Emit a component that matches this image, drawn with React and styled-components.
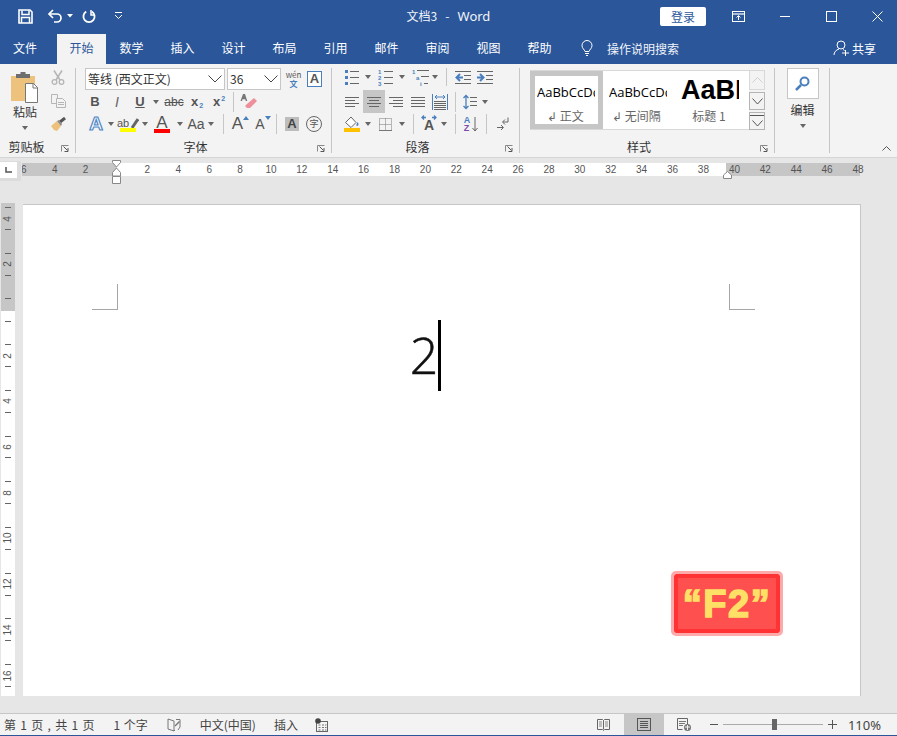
import React from 'react';
import styled, { createGlobalStyle } from 'styled-components';

const UI = `"Noto Sans CJK SC", "Noto Sans", sans-serif`;
const LATIN = `"Liberation Sans", "Noto Sans CJK SC", sans-serif`;
const BLUE = '#2b579a';
const INK = '#555';
const ICON_BLUE = '#4a7fbd';

const Global = createGlobalStyle`
  html, body { margin: 0; padding: 0; background: #e6e6e6; }
  * { box-sizing: border-box; }
`;

const App_ = styled.div`
  width: 897px; height: 736px; overflow: hidden; display: flex; flex-direction: column;
  font-family: ${UI}; font-size: 12px; color: #444; background: #e6e6e6;
`;

/* ---------- title + tabs ---------- */
const TitleBar = styled.header`
  height: 34px; flex: none; background: ${BLUE}; display: grid; grid-template-columns: 1fr auto 1fr; align-items: center; color: #fff; padding-bottom: 2px;
`;
const Quick = styled.div`display: flex; align-items: center; padding-left: 18px; height: 100%;`;
const QuickCell = styled.span`
  display: flex; align-items: center; justify-content: center; flex: none; width: ${p => p.$w}px; margin-left: ${p => p.$l || 0}px; height: 18px;
`;
const DocTitle = styled.div`font: 12px/16px "Noto Sans CJK SC", sans-serif; color: #f1f4f9; white-space: pre; display: flex; align-items: baseline;`;
const DocWord = styled.span`font: 13px/16px "Noto Sans", sans-serif;`;
const WinControls = styled.div`display: flex; align-items: center; justify-content: flex-end; height: 100%;`;
const Login = styled.button`
  width: 46px; height: 19px; padding: 0; border: 0; border-radius: 2px; background: #fff; color: ${BLUE}; font: 12px/19px ${UI}; margin-right: 26px;
`;
const WinBtn = styled.span`display: flex; align-items: center; justify-content: center; width: ${p => p.$w}px; margin-left: ${p => p.$l || 0}px; height: 100%; flex: none;`;

const TabBar = styled.nav`height: 30px; flex: none; background: ${BLUE}; display: flex; align-items: stretch; color: #fff;`;
const Tab = styled.div`
  flex: none; width: ${p => p.$w || 51}px; margin-right: ${p => p.$mr || 0}px; display: flex; align-items: center; justify-content: center;
  font-size: 12px; line-height: 16px; padding-bottom: 2px;
  background: ${p => (p.$active ? '#f3f3f3' : 'transparent')}; color: ${p => (p.$active ? BLUE : '#fff')};
`;
const Tell = styled.div`display: flex; align-items: center; margin-left: 16px; padding-bottom: 2px; gap: 14px; color: #f1f4f9;`;
const Share = styled.div`display: flex; align-items: center; margin-left: auto; padding: 0 21px 2px 0; gap: 3px;`;

/* ---------- ribbon ---------- */
const Ribbon = styled.section`
  height: 94px; flex: none; background: #f3f3f3; border-bottom: 1px solid #d4d4d4; padding-top: 4px; display: flex; align-items: flex-start;
`;
const Group = styled.div`
  flex: none; width: ${p => p.$w}px; height: 85px; display: flex; flex-direction: column; justify-content: space-between;
  border-right: 1px solid #c6c6c6; margin-right: ${p => p.$mr ?? 1}px;
`;
const GroupBody = styled.div`display: flex; flex-direction: column; padding-left: ${p => p.$pl || 0}px;`;
const LabelRow = styled.div`display: flex; align-items: center; height: 14px; padding-right: 2px; margin-bottom: -1px;`;
const GroupLabel = styled.span`flex: 1; text-align: center; font-size: 12px; line-height: 14px; color: #333; padding-right: ${p => p.$nudge || 0}px;`;
const Launcher = styled.span`width: 14px; display: flex; justify-content: center; flex: none; margin-top: 3px; margin-right: 1px;`;

const Row = styled.div`display: flex; height: ${p => p.$h}px; margin-top: ${p => p.$t || 0}px; align-items: stretch;`;
const Cell = styled.span`
  flex: none; width: ${p => p.$w}px; margin-left: ${p => p.$l || 0}px; display: flex; flex-direction: column; align-items: center; justify-content: center;
  background: ${p => (p.$active ? '#c6c6c6' : 'transparent')};
`;
const Caret = styled.i`
  display: block; width: 0; height: 0; border-left: 3.5px solid transparent; border-right: 3.5px solid transparent; border-top: 4px solid #666;
`;
const Rule = styled.i`display: block; width: 1px; height: 20px; background: #c6c6c6;`;
const Letter = styled.span`
  font-family: ${LATIN}; font-size: ${p => p.$s || 13}px; line-height: ${p => p.$lh || 14}px; font-weight: ${p => (p.$b ? 700 : 400)};
  font-style: ${p => (p.$i ? 'italic' : 'normal')}; color: ${p => p.$c || INK};
  text-decoration: ${p => p.$d || 'none'}; white-space: nowrap; display: inline-flex;
`;
const Script = styled.span`
  font-size: 7px; line-height: 7px; color: ${ICON_BLUE}; font-weight: 700; margin-left: 1px; align-self: ${p => (p.$up ? 'flex-start' : 'flex-end')};
`;
const OutlinedA = styled.span`
  font: 700 19px/18px ${LATIN}; color: #fff; -webkit-text-stroke: 1.2px #4f86c6;
`;
const Swatch = styled.i`display: block; width: 16px; height: 4px; background: ${p => p.$c}; margin-top: -1px;`;
const GrayA = styled.span`
  width: 14px; height: 14px; background: #bdbdbd; color: #444; display: flex; align-items: center; justify-content: center; font: 700 13px/14px ${LATIN};
`;
const CircleChar = styled.span`
  width: 16px; height: 16px; border: 1px solid #666; border-radius: 50%; display: flex; align-items: center; justify-content: center; font-size: 9px; line-height: 14px; color: #555;
`;
const BoxA = styled.span`
  width: 15px; height: 16px; border: 1px solid ${ICON_BLUE}; background: #fff; display: flex; align-items: center; justify-content: center; font: 700 13px/14px ${LATIN}; color: #555;
`;
const Wen = styled.span`display: flex; flex-direction: column; align-items: center; font-size: 8px; line-height: 8px; color: #555; gap: 1px;`;
const WenHan = styled.span`color: ${ICON_BLUE}; font-size: 8px; line-height: 8px; font-weight: 700;`;
const Combo = styled.div`
  flex: none; width: ${p => p.$w}px; margin-right: ${p => p.$mr || 0}px; height: 22px; background: #fff; border: 1px solid #c6c6c6; display: flex; align-items: center; justify-content: space-between;
  padding: 0 2px; font-size: 12px; color: #333; line-height: 20px;
`;
const Clip = styled.div`display: flex;`;
const PasteCol = styled.div`width: 50px; flex: none; display: flex; flex-direction: column; align-items: center; padding-top: 4px;`;
const PasteText = styled.span`font-size: 12px; line-height: 16px; margin-top: 1px; margin-bottom: 6px; color: #333;`;
const SmallCol = styled.div`width: 16px; flex: none; display: flex; flex-direction: column; align-items: center; gap: 9px; padding-top: 2px;`;

const Gallery = styled.div`display: flex; margin: 2px 0 0 9px; height: 60px;`;
const GalleryItems = styled.div`display: flex; width: 219px; background: #fff; border: solid #d8d8d8; border-width: 1px 0 1px 0;`;
const StyleItem = styled.div`
  flex: none; width: 73px; display: flex; flex-direction: column; align-items: flex-start; padding: ${p => (p.$sel ? '0 0 0 2px' : '0 0 0 6px')};
  border: ${p => (p.$sel ? '5px solid #c6c6c6' : '0')};
`;
const Sample = styled.div`
  width: 58px; overflow: hidden; white-space: nowrap; font-family: ${p => (p.$big ? LATIN : '"Open Sans", sans-serif')}; color: #000;
  margin-top: ${p => (p.$big ? 9 : p.$sel ? 6 : 11)}px; margin-left: ${p => (p.$big ? -1 : 0)}px; margin-bottom: ${p => (p.$big ? 2 : 0)}px;
  font-size: ${p => (p.$big ? 27 : 13)}px; font-weight: ${p => (p.$big ? 700 : 400)}; line-height: 20px; height: 20px;
`;
const Caption = styled.div`
  width: 100%; text-align: center; font-size: 12px; line-height: 16px; color: #666; white-space: pre; margin-top: 6px; padding-right: ${p => p.$pr || 0}px;
`;
const ScrollCol = styled.div`display: flex; flex-direction: column; width: 16px; gap: 2px; flex: none;`;
const ScrollBtn = styled.div`
  height: ${p => p.$h}px; display: flex; flex-direction: column; gap: 4px; align-items: center; justify-content: center; border: 1px solid ${p => (p.$off ? '#d8d8d8' : '#b4b4b4')};
`;
const MoreLine = styled.i`display: block; width: 14px; height: 1px; background: #555;`;
const EditBody = styled.div`display: flex; flex-direction: column; align-items: center;`;
const EditBtn = styled.div`
  width: 32px; height: 31px; background: #fff; border: 1px solid #c6c6c6; display: flex; align-items: center; justify-content: center;
`;
const EditText = styled.span`font-size: 12px; line-height: 16px; margin: 3px 0 6px; color: #333;`;
const Collapse = styled.div`flex: 1; height: 85px; display: flex; align-items: flex-end; justify-content: flex-end; padding: 0 6px 2px 0;`;

/* ---------- rulers + page ---------- */
const Work = styled.main`flex: 1; min-height: 0; display: flex; flex-direction: column; background: #e6e6e6;`;
const RulerRow = styled.div`display: flex; height: 24px; flex: none; padding-top: 3px;`;
const Corner = styled.div`width: 21px; height: 20px; flex: none; background: #dcdcdc; padding: 1px 4px 3px 0;`;
const CornerBox = styled.div`width: 17px; height: 16px; background: #fff; display: flex; align-items: center; justify-content: center;`;
const HRuler = styled.div`display: flex; height: 13px; margin: 2px 0 0 1px; position: relative; font: 10px/13px ${LATIN}; color: #555;`;
const LeftSeg = styled.div`width: 94.5px; background: #c6c6c6; overflow: hidden; display: flex; flex-direction: row-reverse; padding-right: 15.45px; flex: none;`;
const MidSeg = styled.div`width: 609.5px; background: #fff; display: flex; padding-left: 15.45px; flex: none;`;
const RightSeg = styled.div`width: 134px; background: #c6c6c6; display: flex; flex: none;`;
const RightInner = styled.div`display: flex; margin-left: -7px;`;
const Num = styled.span`flex: none; width: 30.9px; text-align: center;`;
const Marker = styled.span`position: absolute; left: ${p => p.$x}px; top: ${p => p.$y}px; display: block; line-height: 0;`;

const Body = styled.div`flex: 1; min-height: 0; display: flex; padding: 21px 0 17px 0;`;
const VRuler = styled.div`
  width: 14px; margin: 0 8px 0 1px; flex: none; display: flex; flex-direction: column; font: 10px/10px ${LATIN}; color: #555; overflow: hidden;
`;
const VGray = styled.div`height: 108px; flex: none; background: #c6c6c6; display: flex; flex-direction: column; justify-content: flex-end; padding-bottom: 1px; overflow: hidden;`;
const VWhite = styled.div`flex: 1; background: #fff; display: flex; flex-direction: column; overflow: hidden;`;
const VCell = styled.div`flex: none; height: 45.7px; display: flex; flex-direction: column; align-items: center; justify-content: center; gap: 5.4px;`;
const VHalf = styled.div`flex: none; height: ${p => p.$h || 22.85}px; display: flex; align-items: center; justify-content: center;`;
const Tick = styled.i`display: block; width: 6px; height: 1px; background: #666; flex: none;`;
const VNum = styled.span`display: block; height: 10px; transform: rotate(-90deg);`;
const Page = styled.div`
  width: 838px; margin-top: 1px; background: #fff; border-top: 1px solid #c6c6c6; border-right: 1px solid #c6c6c6; position: relative; flex: none; padding: 79px 105px 0 69px;
`;
const Marks = styled.div`display: flex; justify-content: space-between;`;
const Mark = styled.i`
  display: block; width: 26px; height: 26px; border-bottom: 1px solid #a6a6a6;
  ${p => (p.$right ? 'border-left: 1px solid #a6a6a6;' : 'border-right: 1px solid #a6a6a6;')}
`;
const Para = styled.div`display: flex; justify-content: center; align-items: center; height: 71px; margin-top: 10px; padding-left: 4px;`;
const Digit = styled.span`font: 300 50px/71px "Open Sans", "Noto Sans", sans-serif; color: #111; -webkit-text-stroke: 0.5px #111;`;
const Caretline = styled.i`display: block; width: 3px; height: 71px; background: #000;`;
const Badge = styled.div`
  position: absolute; left: 651px; top: 369px; width: 106px; height: 59px; background: #ff5050; border: 4px solid #ff3333; outline: 3px solid #ffaaaa;
  border-radius: 2px; display: flex; align-items: center; justify-content: center; color: #ffe066; white-space: nowrap;
  font: 700 38px/40px ${LATIN}; -webkit-text-stroke: 1.5px #ffe066; letter-spacing: 1.5px;
`;

/* ---------- status ---------- */
const Status = styled.footer`
  height: 23px; flex: none; background: #f3f3f3; border-top: 1px solid #c6c6c6; border-bottom: 1px solid ${BLUE}; display: flex; align-items: stretch; color: #444; font-size: 12px; line-height: 16px; padding-left: 4px;
`;
const StatusText = styled.span`display: flex; align-items: center; white-space: pre; margin-left: ${p => p.$l || 0}px; word-spacing: ${p => p.$ws || 0}px;`;
const StatusIcon = styled.span`display: flex; align-items: center; justify-content: center; flex: none; width: ${p => p.$w}px; margin-left: ${p => p.$l || 0}px; background: ${p => (p.$on ? '#c6c6c6' : 'transparent')};`;
const StatusRight = styled.div`margin-left: auto; display: flex; align-items: stretch; padding-right: 16px;`;
const Track = styled.span`
  width: 100px; margin-left: 5px; display: flex; align-items: center; justify-content: center; background: linear-gradient(#aaa, #aaa) center / 100% 1px no-repeat;
`;
const Thumb = styled.i`display: block; width: 5px; height: 11px; background: #666; margin-left: 3px;`;
const Zoom = styled.span`display: flex; align-items: center; margin-left: 11px; font: 13px/16px "Noto Sans", sans-serif; color: #444;`;

/* ---------- icons ---------- */
const Svg = ({ w, h, children, ...r }) => (
  <svg width={w} height={h} viewBox={`0 0 ${w} ${h}`} fill="none" style={{ display: 'block', flex: 'none' }} {...r}>{children}</svg>
);
const Lines = ({ rows, c = '#666' }) => rows.map(([a, b, y], i) => <path key={i} d={`M${a} ${y + 0.5}H${b}`} stroke={c} />);

const SaveIco = () => (
  <Svg w={15} h={15}><path d="M1 1h11l2 2v11H1z" stroke="#fff" strokeWidth="1.6" /><path d="M4 1.5v4h7v-4M3.5 14V8.5h8V14" stroke="#fff" strokeWidth="1.5" /></Svg>
);
const UndoIco = () => (
  <Svg w={16} h={14}><path d="M2 5h8a4 4 0 0 1 0 8H7" stroke="#fff" strokeWidth="1.7" /><path d="M6 1 2 5l4 4" stroke="#fff" strokeWidth="1.7" /></Svg>
);
const RedoIco = () => (
  <Svg w={14} h={14}><path d="M4.2 2.6a5.6 5.6 0 1 0 5.6 0" stroke="#fff" strokeWidth="1.8" /><path d="M9 1v5h4" stroke="#fff" strokeWidth="1.5" /></Svg>
);
const CustomizeIco = () => (
  <Svg w={9} h={8}><path d="M1 .5h7" stroke="#fff" /><path d="M1 3l3.5 3.5L8 3" stroke="#fff" /></Svg>
);
const WhiteCaret = () => <Svg w={6} h={4}><path d="M0 0h6L3 3.5z" fill="#fff" /></Svg>;
const DisplayIco = () => (
  <Svg w={13} h={11}><rect x=".5" y=".5" width="12" height="10" stroke="#fff" /><path d="M0 3h13" stroke="#fff" strokeWidth="1.2" /><path d="M6.5 9V5M4.5 6.5l2-2 2 2" stroke="#fff" /></Svg>
);
const MinIco = () => <Svg w={10} h={1}><path d="M0 .5h10" stroke="#fff" /></Svg>;
const MaxIco = () => <Svg w={11} h={11}><rect x=".5" y=".5" width="10" height="10" stroke="#fff" /></Svg>;
const CloseIco = () => <Svg w={11} h={11}><path d="M.5.5l10 10M10.5.5l-10 10" stroke="#fff" /></Svg>;
const BulbIco = () => (
  <Svg w={12} h={16}><path d="M4 11.5C3.5 9.5 1 8.5 1 5.5a5 5 0 0 1 10 0c0 3-2.5 4-3 6z" stroke="#fff" /><path d="M4 13.5h4M5 15.5h2" stroke="#fff" /></Svg>
);
const PersonIco = () => (
  <Svg w={16} h={16}><circle cx="8" cy="5" r="4" stroke="#fff" /><path d="M1 15c0-3 2-5 5-6M10 9.5c.6.2 1.2.6 1.6 1M9 13h7M12.5 10v6" stroke="#fff" /></Svg>
);
const PasteIco = () => (
  <Svg w={29} h={31}>
    <path d="M0 4h24v25H0z" fill="#ecc27c" />
    <path d="M5 4V2h4.5V0h5v2H19v4H5z" fill="#6e6e6e" />
    <path d="M14.5 11.5h8l4 4v15h-12z" fill="#fff" stroke="#777" />
    <path d="M22 11.5v4.5h4.5" stroke="#777" />
  </Svg>
);
const ScissorsIco = () => (
  <Svg w={14} h={15}><path d="M3 .5 9 10M11 .5 5 10" stroke="#b5b5b5" strokeWidth="1.5" /><circle cx="3.5" cy="12" r="2.3" stroke="#b5b5b5" strokeWidth="1.3" /><circle cx="10.5" cy="12" r="2.3" stroke="#b5b5b5" strokeWidth="1.3" /></Svg>
);
const CopyIco = () => (
  <Svg w={15} h={14}><path d="M.5.5h6v9h-6z" stroke="#b5b5b5" fill="#f3f3f3" /><path d="M5.5 4.5h6l3 3v6h-9z" stroke="#b5b5b5" fill="#f3f3f3" /><path d="M7 8.5h6M7 10.5h6" stroke="#b5b5b5" /></Svg>
);
const BrushIco = () => (
  <Svg w={16} h={15}><path d="M10 5 15 1" stroke="#555" strokeWidth="3" /><path d="M1 9l6-5 4 5-4 5-3-1z" fill="#edc07c" /><path d="M7 4l2-1 3 4-1 2z" fill="#8a8a8a" /></Svg>
);
const Launch = () => (
  <Svg w={8} h={7}><path d="M.5 6.5V.5h7" stroke="#888" /><path d="M2.5 1.5l4 4M7 3v3.5H3.5" stroke="#555" /></Svg>
);
const Chevron = ({ c = '#444', w = 14, h = 8 }) => (
  <Svg w={w} h={h}><path d={`M.5 .5 ${w / 2} ${h - 1} ${w - 0.5} .5`} stroke={c} /></Svg>
);
const ChevronUp = ({ c, w = 10, h = 6 }) => (
  <Svg w={w} h={h}><path d={`M.5 ${h - 0.5} ${w / 2} .5 ${w - 0.5} ${h - 0.5}`} stroke={c} /></Svg>
);
const EraserIco = () => (
  <Svg w={18} h={17}><path d="M3 0 .5 7h1.5l.6-1.8h2.6L5.8 7h1.5L5 0z" fill="#777" /><path d="M7 10l7-6 3 3-7 7H7l-2-2z" fill="#ee8f9c" /></Svg>
);
const HighlightIco = () => (
  <Svg w={8} h={12}><path d="M1 11 7 2" stroke="#666" strokeWidth="3" /></Svg>
);
const TriUp = () => <Svg w={6} h={4}><path d="M3 0l3 4H0z" fill={ICON_BLUE} /></Svg>;
const TriDown = () => <Svg w={6} h={4}><path d="M0 0h6L3 4z" fill={ICON_BLUE} /></Svg>;
const Dots = ({ ys, x = 1.5 }) => ys.map(y => <rect key={y} x={x} y={y} width="3" height="3" fill={ICON_BLUE} />);
const BulletsIco = () => (
  <Svg w={14} h={17}><Dots x={0} ys={[1, 7, 13]} /><Lines rows={[[5, 14, 2], [5, 14, 8], [5, 14, 14]]} /></Svg>
);
const Small = styled.text`font: 700 6px ${LATIN}; fill: ${ICON_BLUE};`;
const NumbersIco = () => (
  <Svg w={16} h={18}>
    <Small x="0" y="6">1</Small><Small x="0" y="12">2</Small><Small x="0" y="18">3</Small>
    <Lines rows={[[6, 15, 3], [6, 15, 9], [6, 15, 15]]} />
  </Svg>
);
const MultiIco = () => (
  <Svg w={17} h={18}>
    <Small x="0" y="6">1</Small><Small x="4" y="12">a</Small><Small x="8" y="18">i</Small>
    <Lines rows={[[5, 17, 2], [9, 17, 8], [12, 16, 15]]} />
  </Svg>
);
const OutdentIco = () => (
  <Svg w={16} h={13}>
    <path d="M8 6.5H2M5 3 1.5 6.5 5 10" stroke={ICON_BLUE} strokeWidth="2" />
    <Lines rows={[[0, 16, 0], [9, 16, 4], [9, 16, 8], [0, 16, 12]]} />
  </Svg>
);
const IndentIco = () => (
  <Svg w={16} h={13}>
    <path d="M0 6.5h6M3 3l3.5 3.5L3 10" stroke={ICON_BLUE} strokeWidth="2" />
    <Lines rows={[[0, 16, 0], [9, 16, 4], [9, 16, 8], [0, 16, 12]]} />
  </Svg>
);
const AlignIco = ({ rows }) => <Svg w={14} h={11}><Lines rows={rows} /></Svg>;
const DistIco = () => (
  <Svg w={16} h={16}>
    <path d="M.5 0v16M15.5 0v16" stroke={ICON_BLUE} />
    <path d="M3 3h10M5 1 3 3l2 2M11 1l2 2-2 2" stroke={ICON_BLUE} />
    <Lines rows={[[2, 14, 7], [2, 14, 9], [2, 14, 11], [2, 14, 13], [2, 14, 15]]} />
  </Svg>
);
const SpacingIco = () => (
  <Svg w={14} h={16}>
    <path d="M3 2v12M.5 4 3 1.5 5.5 4M.5 12 3 14.5 5.5 12" stroke={ICON_BLUE} strokeWidth="1.3" />
    <Lines rows={[[7, 14, 3], [7, 14, 7], [7, 14, 11]]} />
  </Svg>
);
const FillIco = () => (
  <Svg w={16} h={16}>
    <path d="M7 1 1.5 6.5 7 11.5l5-5z" fill="#fff" stroke="#666" />
    <path d="M13.5 6c1 1.5 1.5 2.5.5 3.5s-2 0-1.5-1z" fill={ICON_BLUE} />
    <rect y="12" width="16" height="4" fill="#ffc000" />
  </Svg>
);
const BordersIco = () => (
  <Svg w={13} h={13}>
    <path d="M.5 .5h12v12H.5zM.5 6.5h12M6.5 .5v12" stroke="#777" strokeDasharray="1 1" />
    <path d="M0 12.5h13" stroke="#777" />
  </Svg>
);
const ArrowsTop = () => (
  <Svg w={16} h={5}><path d="M1 2.5h4M3 .5l-2 2 2 2M11 2.5h4M13 .5l2 2-2 2" stroke={ICON_BLUE} strokeWidth="1.3" /></Svg>
);
const SortStack = styled.span`display: flex; align-items: center; gap: 2px;`;
const TopAligned = styled.span`display: flex; align-items: flex-start; gap: 0;`;
const SortLetters = styled.span`display: flex; flex-direction: column; font: 700 9px/8px ${LATIN};`;
const ChArrows = styled.span`display: flex; flex-direction: column; align-items: center; margin-top: -2px;`;
const DownArrow = () => <Svg w={6} h={15}><path d="M3 0v14M.5 11 3 14l2.5-3" stroke="#666" /></Svg>;
const PilcrowIco = () => (
  <Svg w={12} h={14}>
    <path d="M11 .5V5H6M8 2.5 5.5 5 8 7.5" stroke="#666" />
    <path d="M0 10.5h6M4 8l2.5 2.5L4 13" stroke="#666" />
  </Svg>
);
const SearchIco = () => (
  <Svg w={15} h={15}><circle cx="9.5" cy="5.5" r="4" stroke={ICON_BLUE} strokeWidth="2" /><path d="M6 9l-5 5" stroke={ICON_BLUE} strokeWidth="2.5" /></Svg>
);
const TabStopIco = () => <Svg w={7} h={6}><path d="M1 0v5h6" stroke="#555" strokeWidth="1.5" /></Svg>;
const HourglassIco = () => (
  <Svg w={9} h={25}>
    <path d="M.5 .5h8v2L4.5 7 .5 2.5z" fill="#fff" stroke="#888" />
    <path d="M4.5 8 .5 12.5V16h8v-3.5z" fill="#fff" stroke="#888" />
    <path d="M.5 16.5h8v7h-8z" fill="#fff" stroke="#888" />
  </Svg>
);
const RightIndentIco = () => <Svg w={9} h={8}><path d="M4.5 .5 8.5 4v3.5h-8V4z" fill="#fff" stroke="#888" /></Svg>;
const ReadIco = () => (
  <Svg w={13} h={13}><path d="M.5 1.5h5l1 1 1-1h5v10h-5l-1 1-1-1h-5zM6.5 2.5v9" stroke="#666" /><path d="M2 4h3M2 6h3M2 8h3M8 4h3M8 6h3M8 8h3" stroke="#888" /></Svg>
);
const PrintIco = () => (
  <Svg w={14} h={13}><rect x=".5" y=".5" width="13" height="12" stroke="#555" /><path d="M3 3.5h8M3 5.5h8M3 7.5h8M3 9.5h8" stroke="#555" /></Svg>
);
const WebIco = () => (
  <Svg w={14} h={13}><path d="M.5 .5h10v9" stroke="#666" /><path d="M.5 .5v11h5" stroke="#666" /><path d="M2 3.5h7M2 5.5h6M2 7.5h4" stroke="#777" /><circle cx="10.5" cy="9.5" r="3.5" fill="#777" /><path d="M8 9h5M10.5 7v5" stroke="#f3f3f3" /></Svg>
);
const BookIco = () => (
  <Svg w={14} h={14}><path d="M7 3 1 1v10l6 2 1-1" stroke="#777" /><path d="M7 3v10" stroke="#777" /><path d="M9 1.5h4V9l-2 3" stroke="#777" /><path d="M8 8 12.5 3.5" stroke="#777" strokeWidth="1.5" /></Svg>
);
const MacroIco = () => (
  <Svg w={13} h={14}>
    <rect x="1.5" y="3.5" width="11" height="10" stroke="#666" fill="#f3f3f3" />
    <path d="M3.5 7h2M7 7h2M10 7h1.500M3.500 9.500h2M7 9.500h2M10 9.500h1.500M3.500 12h2M7 12h2M10 12h1.500" stroke="#777" />
    <circle cx="3" cy="3" r="2.8" fill="#444" />
  </Svg>
);

const hLeft = [6, 4, 2];
const hMid = Array.from({ length: 19 }, (_, i) => (i + 1) * 2);
const hRight = [40, 42, 44, 46, 48];
const vDown = [2, 4, 6, 8, 10, 12, 14, 16];

export default function App() {
  return (
    <App_>
      <Global />
      <TitleBar>
        <Quick>
          <QuickCell $w={15}><SaveIco /></QuickCell>
          <QuickCell $w={16} $l={14}><UndoIco /></QuickCell>
          <QuickCell $w={6} $l={4}><WhiteCaret /></QuickCell>
          <QuickCell $w={14} $l={9}><RedoIco /></QuickCell>
          <QuickCell $w={9} $l={18}><CustomizeIco /></QuickCell>
        </Quick>
        <DocTitle>文档3   -   <DocWord>Word</DocWord></DocTitle>
        <WinControls>
          <Login>登录</Login>
          <WinBtn $w={13}><DisplayIco /></WinBtn>
          <WinBtn $w={46} $l={17}><MinIco /></WinBtn>
          <WinBtn $w={46}><MaxIco /></WinBtn>
          <WinBtn $w={40} $l={3}><CloseIco /></WinBtn>
        </WinControls>
      </TitleBar>
      <TabBar>
        <Tab $w={50} $mr={7}>文件</Tab>
        <Tab $w={49} $active>开始</Tab>
        {['数学', '插入', '设计', '布局', '引用', '邮件', '审阅', '视图', '帮助'].map(t => <Tab key={t}>{t}</Tab>)}
        <Tell><BulbIco /><span>操作说明搜索</span></Tell>
        <Share><PersonIco /><span>共享</span></Share>
      </TabBar>

      <Ribbon>
        <Group $w={76}>
          <Clip>
            <PasteCol>
              <PasteIco />
              <PasteText>粘贴</PasteText>
              <Caret />
            </PasteCol>
            <SmallCol>
              <ScissorsIco />
              <CopyIco />
              <BrushIco />
            </SmallCol>
          </Clip>
          <LabelRow><GroupLabel $nudge={5}>剪贴板</GroupLabel><Launcher><Launch /></Launcher></LabelRow>
        </Group>

        <Group $w={255}>
          <GroupBody $pl={8}>
            <Row $h={22}>
              <Combo $w={140} $mr={2}><span>等线 (西文正文)</span><Chevron /></Combo>
              <Combo $w={54}><span>36</span><Chevron /></Combo>
              <Cell $w={21} $l={2}><Wen><span>wén</span><WenHan>文</WenHan></Wen></Cell>
              <Cell $w={15} $l={3}><BoxA>A</BoxA></Cell>
            </Row>
            <Row $h={22} $t={1}>
              <Cell $w={20}><Letter $b>B</Letter></Cell>
              <Cell $w={24}><Letter $i $s={14} $c="#666">I</Letter></Cell>
              <Cell $w={22}><Letter $b $d="underline" $c="#555">U</Letter></Cell>
              <Cell $w={10}><Caret /></Cell>
              <Cell $w={26}><Letter $s={12} $d="line-through">abc</Letter></Cell>
              <Cell $w={20}><Letter $b $s={13}>x<Script>2</Script></Letter></Cell>
              <Cell $w={24}><Letter $b $s={13}>x<Script $up>2</Script></Letter></Cell>
              <Cell $w={4}><Rule /></Cell>
              <Cell $w={28}><EraserIco /></Cell>
            </Row>
            <Row $h={22}>
              <Cell $w={22}><OutlinedA>A</OutlinedA></Cell>
              <Cell $w={7}><Caret /></Cell>
              <Cell $w={28}>
                <SortStack><Letter $s={11} $lh={12}>ab</Letter><HighlightIco /></SortStack>
                <Swatch $c="#ffff00" />
              </Cell>
              <Cell $w={6}><Caret /></Cell>
              <Cell $w={28}><Letter $s={17} $lh={15}>A</Letter><Swatch $c="#ff0000" /></Cell>
              <Cell $w={8}><Caret /></Cell>
              <Cell $w={24}><Letter $s={14}>Aa</Letter></Cell>
              <Cell $w={6}><Caret /></Cell>
              <Cell $w={18}><Rule /></Cell>
              <Cell $w={17}><TopAligned><Letter $s={17} $lh={16}>A</Letter><TriUp /></TopAligned></Cell>
              <Cell $w={14} $l={7}><TopAligned><Letter $s={14} $lh={16}>A</Letter><TriDown /></TopAligned></Cell>
              <Cell $w={12}><Rule /></Cell>
              <Cell $w={14} $l={3}><GrayA>A</GrayA></Cell>
              <Cell $w={18} $l={6}><CircleChar>字</CircleChar></Cell>
            </Row>
          </GroupBody>
          <LabelRow><GroupLabel>字体</GroupLabel><Launcher><Launch /></Launcher></LabelRow>
        </Group>

        <Group $w={187}>
          <GroupBody $pl={8}>
            <Row $h={18}>
              <Cell $w={22}><BulletsIco /></Cell>
              <Cell $w={10}><Caret /></Cell>
              <Cell $w={23} $l={1}><NumbersIco /></Cell>
              <Cell $w={10}><Caret /></Cell>
              <Cell $w={22} $l={2}><MultiIco /></Cell>
              <Cell $w={8}><Caret /></Cell>
              <Cell $w={14}><Rule /></Cell>
              <Cell $w={18} $l={1}><OutdentIco /></Cell>
              <Cell $w={22} $l={2}><IndentIco /></Cell>
            </Row>
            <Row $h={23} $t={4}>
              <Cell $w={22}><AlignIco rows={[[0, 14, 1], [0, 10, 4], [0, 14, 7], [0, 10, 10]]} /></Cell>
              <Cell $w={22} $active><AlignIco rows={[[0, 14, 1], [2, 12, 4], [0, 14, 7], [2, 12, 10]]} /></Cell>
              <Cell $w={22}><AlignIco rows={[[0, 14, 1], [4, 14, 4], [0, 14, 7], [4, 14, 10]]} /></Cell>
              <Cell $w={22}><AlignIco rows={[[0, 14, 1], [0, 14, 4], [0, 14, 7], [0, 14, 10]]} /></Cell>
              <Cell $w={22}><DistIco /></Cell>
              <Cell $w={8}><Rule /></Cell>
              <Cell $w={22}><SpacingIco /></Cell>
              <Cell $w={8}><Caret /></Cell>
            </Row>
            <Row $h={22}>
              <Cell $w={22}><FillIco /></Cell>
              <Cell $w={10}><Caret /></Cell>
              <Cell $w={23} $l={1}><BordersIco /></Cell>
              <Cell $w={10}><Caret /></Cell>
              <Cell $w={12}><Rule /></Cell>
              <Cell $w={20}><ChArrows><ArrowsTop /><Letter $b $s={14} $lh={11}>A</Letter></ChArrows></Cell>
              <Cell $w={10}><Caret /></Cell>
              <Cell $w={12}><Rule /></Cell>
              <Cell $w={20}>
                <SortStack>
                  <SortLetters><Letter $b $s={9} $lh={8} $c={ICON_BLUE}>A</Letter><Letter $b $s={9} $lh={8} $c="#7e4ba8">Z</Letter></SortLetters>
                  <DownArrow />
                </SortStack>
              </Cell>
              <Cell $w={10}><Rule /></Cell>
              <Cell $w={24}><PilcrowIco /></Cell>
            </Row>
          </GroupBody>
          <LabelRow><GroupLabel>段落</GroupLabel><Launcher><Launch /></Launcher></LabelRow>
        </Group>

        <Group $w={254}>
          <Gallery>
            <GalleryItems>
              <StyleItem $sel>
                <Sample $sel>AaBbCcDd</Sample>
                <Caption $pr={4}>↲ 正文</Caption>
              </StyleItem>
              <StyleItem>
                <Sample>AaBbCcDd</Sample>
                <Caption $pr={12}>↲ 无间隔</Caption>
              </StyleItem>
              <StyleItem>
                <Sample $big>AaBbCcDd</Sample>
                <Caption $pr={13}>标题 1</Caption>
              </StyleItem>
            </GalleryItems>
            <ScrollCol>
              <ScrollBtn $h={20} $off><ChevronUp c="#d0d0d0" w={11} h={6} /></ScrollBtn>
              <ScrollBtn $h={18}><Chevron c="#555" w={11} h={7} /></ScrollBtn>
              <ScrollBtn $h={18}><MoreLine /><Chevron c="#555" w={11} h={7} /></ScrollBtn>
            </ScrollCol>
          </Gallery>
          <LabelRow><GroupLabel>样式</GroupLabel><Launcher><Launch /></Launcher></LabelRow>
        </Group>

        <Group $w={54} $mr={0}>
          <EditBody>
            <EditBtn><SearchIco /></EditBtn>
            <EditText>编辑</EditText>
            <Caret />
          </EditBody>
        </Group>
        <Collapse><ChevronUp c="#555" w={9} h={5} /></Collapse>
      </Ribbon>

      <Work>
        <RulerRow>
          <Corner><CornerBox><TabStopIco /></CornerBox></Corner>
          <HRuler>
            <LeftSeg>{[...hLeft].reverse().map(n => <Num key={n}>{n}</Num>)}</LeftSeg>
            <MidSeg>{hMid.map(n => <Num key={n}>{n}</Num>)}</MidSeg>
            <RightSeg><RightInner>{hRight.map(n => <Num key={n}>{n}</Num>)}</RightInner></RightSeg>
            <Marker $x={90} $y={-3}><HourglassIco /></Marker>
            <Marker $x={701} $y={8}><RightIndentIco /></Marker>
          </HRuler>
        </RulerRow>
        <Body>
          <VRuler>
            <VGray>
              <VCell><Tick /><VNum>4</VNum><Tick /></VCell>
              <VCell><Tick /><VNum>2</VNum><Tick /></VCell>
              <VHalf><Tick /></VHalf>
            </VGray>
            <VWhite>
              <VHalf $h={21.85}><Tick /></VHalf>
              {vDown.map(n => <VCell key={n}><Tick /><VNum>{n}</VNum><Tick /></VCell>)}
            </VWhite>
          </VRuler>
          <Page>
            <Marks><Mark /><Mark $right /></Marks>
            <Para><Digit>2</Digit><Caretline /></Para>
            <Badge>“F2”</Badge>
          </Page>
        </Body>
      </Work>

      <Status>
        <StatusText $ws={1.6}>第 1 页 , 共 1 页</StatusText>
        <StatusText $l={19} $ws={1}>1 个字</StatusText>
        <StatusIcon $w={15} $l={19}><BookIco /></StatusIcon>
        <StatusText $l={18}>中文(中国)</StatusText>
        <StatusText $l={18}>插入</StatusText>
        <StatusIcon $w={13} $l={17}><MacroIco /></StatusIcon>
        <StatusRight>
          <StatusIcon $w={40}><ReadIco /></StatusIcon>
          <StatusIcon $w={40} $on><PrintIco /></StatusIcon>
          <StatusIcon $w={40}><WebIco /></StatusIcon>
          <StatusIcon $w={8} $l={6}><Svg w={8} h={1}><path d="M0 .5h8" stroke="#555" /></Svg></StatusIcon>
          <Track><Thumb /></Track>
          <StatusIcon $w={9} $l={5}><Svg w={9} h={9}><path d="M0 4.5h9M4.5 0v9" stroke="#555" /></Svg></StatusIcon>
          <Zoom>110%</Zoom>
        </StatusRight>
      </Status>
    </App_>
  );
}
